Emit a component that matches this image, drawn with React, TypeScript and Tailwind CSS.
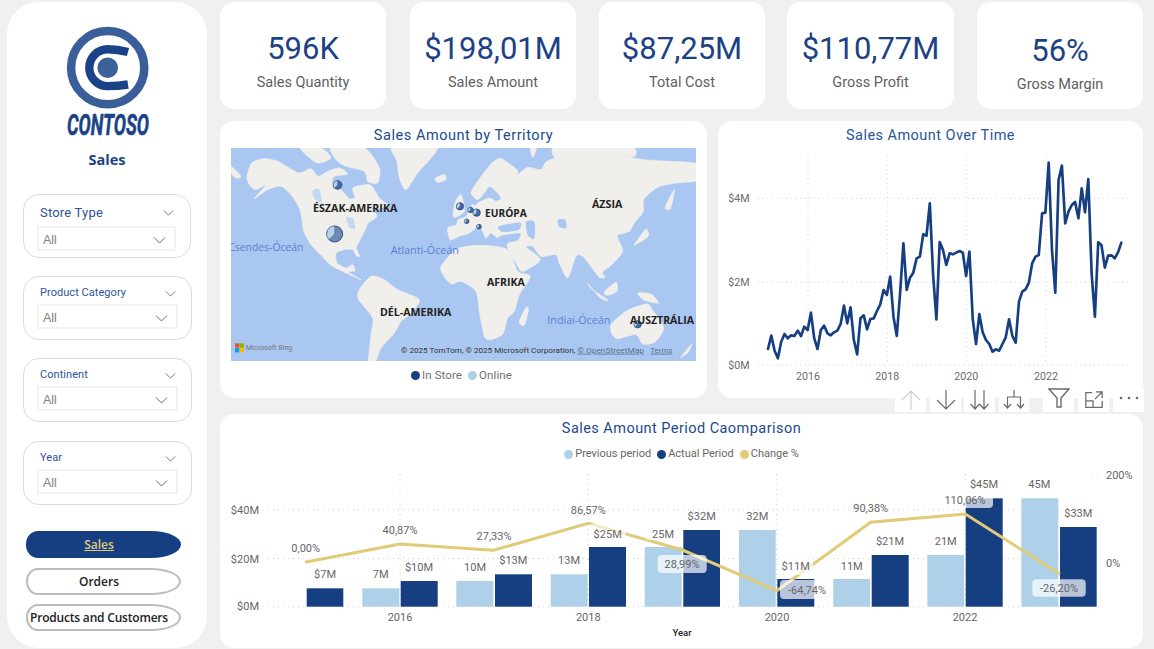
import React from "react";

const NAVY = "#163f82";
const LIGHT = "#aed0e8";
const GOLD = "#e0cb78";

function Kpi({ value, label, w, ml, low }: { value: string; label: string; w: string; ml: string; low?: boolean }) {
  return (
    <div className={`${w} ${ml} h-[107px] bg-white rounded-[14px] flex flex-col items-center ${low ? "pt-[30px]" : "pt-[28px]"}`}>
      <div className="text-[31px] font-[450] leading-[38px] text-[#1c4283]">{value}</div>
      <div className="text-[14.5px] leading-[20px] mt-[5px] text-[#5f5f5f]">{label}</div>
    </div>
  );
}

function Chevron({ cls }: { cls: string }) {
  return (
    <svg className={cls} viewBox="0 0 12 7" fill="none" stroke="#666" strokeWidth="1">
      <path d="M0.5 0.5 6 6 11.5 0.5" />
    </svg>
  );
}

function Slicer({ title, small, mt, w }: { title: string; small?: boolean; mt: string; w: string }) {
  return (
    <div className={`${w} ${mt} ml-[16px] h-[64px] rounded-[16px] border border-[#dcdcdc] pl-[13px] ${small ? "pr-[13px] pt-[8px]" : "pr-[14px] pt-[9px]"}`}>
      <div className="flex items-center justify-between pl-[3px] pr-[2px] h-[17px]">
        <span className={small ? "text-[11px] tracking-[0.05px] text-[#2d5596]" : "text-[13px] tracking-[0.2px] text-[#2d5596]"}>{title}</span>
        <Chevron cls="w-[11px] h-[6px]" />
      </div>
      <div className={`${small ? "mt-[2px]" : "mt-[5px]"} h-[25px] border-2 border-[#f2f2f2] flex items-center justify-between pl-[4px] pr-[8px] pt-[3px] text-[12.5px] text-[#808080] [font-family:'Liberation_Sans',sans-serif]`}>
        <span>All</span>
        <Chevron cls="w-[13px] h-[7px]" />
      </div>
    </div>
  );
}

function Logo() {
  return (
    <svg className="w-[90px] h-[112px] mx-auto mt-[22px] block" viewBox="62 24 90 112">
      <circle cx="107.7" cy="67.7" r="36.6" fill="none" stroke="#3a5e99" strokeWidth="8.5" />
      <path d="M128 52Q118 49.3 107.7 49.3A18.4 18.4 0 0 0 107.7 86.100Q118 86.100 128 84.500" fill="none" stroke="#1a4287" strokeWidth="8.400" />
      <circle cx="107.7" cy="67.7" r="10.3" fill="#3c6199" />
      <text x="67" y="134.500" textLength="82" lengthAdjust="spacingAndGlyphs" fontSize="30" fontWeight="700" fontStyle="italic" fill="#1a4287" stroke="#1a4287" strokeWidth="0.6">CONTOSO</text>
    </svg>
  );
}

function NavBtn({ label, active, mt, tight }: { label: string; active?: boolean; mt: string; tight?: boolean }) {
  const base = "ml-[19px] w-[155px] h-[27px] flex items-center justify-center pr-[9px] text-[12px] font-semibold [font-family:'Open_Sans',sans-serif] rounded-[12px_30px_30px_12px/13px_50%_50%_13px]";
  return (
    <div className={`${base} ${mt} ${active ? "bg-[#163f82] text-[#e0cb78] underline" : "bg-white border-2 border-[#bcbcbc] text-[#222]"} ${tight ? "tracking-[-0.2px] whitespace-nowrap" : ""}`}>
      {label}
    </div>
  );
}

function Sidebar() {
  return (
    <div className="w-[200px] h-[646px] bg-white rounded-[32px] flex flex-col shrink-0">
      <Logo />
      <div className="mt-[14px] text-center text-[14.5px] font-bold text-[#1c4283] leading-[20px] [font-family:'Open_Sans',sans-serif]">Sales</div>
      <Slicer title="Store Type" mt="mt-[24px]" w="w-[168px]" />
      <Slicer title="Product Category" small mt="mt-[18px]" w="w-[169px]" />
      <Slicer title="Continent" small mt="mt-[18px]" w="w-[169px]" />
      <Slicer title="Year" small mt="mt-[19px]" w="w-[169px]" />
      <NavBtn label="Sales" active mt="mt-[26px]" />
      <NavBtn label="Orders" mt="mt-[10px]" />
      <NavBtn label="Products and Customers" mt="mt-[9px]" tight />
    </div>
  );
}

function Pie({ cx, cy, r, main }: { cx: number; cy: number; r: number; main?: boolean }) {
  const a = -Math.PI / 2;
  const b = a - 2.35;
  const x0 = cx + r * Math.cos(a);
  const y0 = cy + r * Math.sin(a);
  const x1 = cx + r * Math.cos(b);
  const y1 = cy + r * Math.sin(b);
  return (
    <g>
      <circle cx={cx} cy={cy} r={r} fill={main ? "#7089b3" : "#49689f"} stroke="#163f82" strokeWidth={main ? 2.5 : 2} />
      <path d={`M${cx} ${cy}L${x0} ${y0}A${r} ${r} 0 0 0 ${x1} ${y1}Z`} fill="#b8d2e8" stroke="#163f82" strokeWidth="1" />
    </g>
  );
}

function smooth(points: string) {
  const p = points.split(" ").map((s) => s.split(",").map(Number));
  const n = p.length;
  let d = `M${p[0][0]} ${p[0][1]}`;
  for (let i = 0; i < n; i++) {
    const a = p[(i - 1 + n) % n];
    const b = p[i];
    const c = p[(i + 1) % n];
    const e = p[(i + 2) % n];
    const k = 8;
    d += `C${b[0] + (c[0] - a[0]) / k} ${b[1] + (c[1] - a[1]) / k} ${c[0] - (e[0] - b[0]) / k} ${c[1] - (e[1] - b[1]) / k} ${c[0]} ${c[1]}`;
  }
  return d + "Z";
}

const landLeft = [
  "48,85 62,45 100,32 140,40 175,60 205,75 240,62 262,85 290,70 325,60 350,78 310,85 303,105 308,122 330,125 355,152 372,148 365,120 395,112 420,112 445,150 470,172 440,182 420,178 438,205 412,225 405,240 385,280 376,300 386,325 375,322 365,305 340,305 315,315 318,345 345,360 365,350 372,368 352,372 390,395 345,375 300,352 270,322 240,290 218,250 213,215 205,180 180,140 150,115 110,125 70,152 105,110 75,125 55,110",
  "210,0 270,0 300,30 260,45 225,20",
  "300,0 400,0 445,60 440,105 410,100 400,70 345,55 320,40",
  "0,55 30,85 15,90 0,75",
  "485,-5 615,-5 600,30 560,75 525,125 505,90 498,40",
  "612,90 640,80 645,95 620,103",
  "385,425 420,385 460,395 500,425 565,455 535,500 510,520 490,555 450,600 430,650 412,650 420,560 425,510 383,455",
  "672,165 690,140 700,190 668,208",
  "690,298 665,312 630,355 635,378 660,408 690,400 735,430 745,490 760,565 780,575 815,558 830,510 850,490 865,440 898,385 860,370 830,305 750,292",
];

const landRight = [
  "-40,240 -15,232 -8,215 15,205 30,178 35,168 42,175 50,165 85,150 105,160 120,150 105,130 85,115 70,135 50,155 30,135 50,100 90,48 120,32 168,65 170,80 200,58 240,65 260,38 350,16 450,20 560,36 720,48 720,95 640,106 590,118 548,155 547,190 520,225 505,250 480,258 468,265 485,310 450,352 425,372 432,388 415,388 395,362 365,325 345,325 320,390 295,345 285,320 240,325 215,295 195,298 238,335 185,370 165,345 140,300 142,285 170,278 178,255 120,262 110,270 90,255 75,270 60,240 45,240 25,255 -5,265 -32,275",
  "530,275 555,243 562,265 520,292",
  "612,178 640,125 628,182",
  "380,405 418,450 442,457 395,425",
  "430,432 465,403 468,430 440,442",
  "530,435 570,438 592,465 550,457",
  "450,530 490,493 520,478 560,468 577,490 608,540 582,582 545,588 525,560 470,572 453,557",
  "660,628 692,588 682,612",
  "175,522 195,478 202,485 190,532",
  "208,-5 228,-5 215,28",
  "285,-5 505,-5 520,25 450,25 300,42",
];

const waterRight = [
  "195,222 220,222 220,272 200,262",
  "113,235 178,224 172,246 125,252",
  "290,215 312,215 316,240 295,237",
];

const waterLeft = ["345,208 367,213 372,242 355,237", "245,128 264,123 272,162 250,152"];

function WorldMap() {
  return (
    <svg className="block w-[465px] h-[213px] mx-auto" viewBox="33 84 1395 639">
      <rect x="33" y="84" width="1395" height="639" fill="#a9c7f0" />
      <g transform="translate(33 84)" stroke="#f0efeb" strokeWidth="2">
        {landLeft.map((p, i) => (
          <path key={i} d={smooth(p)} fill="#f0efeb" />
        ))}
      </g>
      <g transform="translate(33 84)">
        {waterLeft.map((p, i) => (
          <path key={i} d={smooth(p)} fill="#c3d7f0" />
        ))}
      </g>
      <g transform="translate(723 84)" stroke="#f0efeb" strokeWidth="2">
        {landRight.map((p, i) => (
          <path key={i} d={smooth(p)} fill="#f0efeb" />
        ))}
      </g>
      <g transform="translate(723 84)">
        {waterRight.map((p, i) => (
          <path key={i} d={smooth(p)} fill="#a9c7f0" />
        ))}
      </g>
      <Pie cx={353} cy={195} r={13} />
      <Pie cx={344} cy={342} r={24} main />
      <Pie cx={720} cy={259} r={11} />
      <Pie cx={752} cy={270} r={8} />
      <Pie cx={770} cy={278} r={11} />
      <Pie cx={740} cy={304} r={7} />
      <Pie cx={777} cy={320} r={7} />
      <Pie cx={1253} cy={613} r={11} />
      <g fontSize="32" fontWeight="700" fill="#222" className="[font-family:'Open_Sans',sans-serif]">
        <text x="279" y="275" textLength="253" lengthAdjust="spacingAndGlyphs">ÉSZAK-AMERIKA</text>
        <text x="795" y="291" textLength="125" lengthAdjust="spacingAndGlyphs">EURÓPA</text>
        <text x="1116" y="264" textLength="91" lengthAdjust="spacingAndGlyphs">ÁZSIA</text>
        <text x="801" y="499" textLength="113" lengthAdjust="spacingAndGlyphs">AFRIKA</text>
        <text x="480" y="587" textLength="214" lengthAdjust="spacingAndGlyphs">DÉL-AMERIKA</text>
        <text x="1230" y="613" textLength="192" lengthAdjust="spacingAndGlyphs">AUSZTRÁLIA</text>
      </g>
      <g fontSize="33" fill="#5a7fd2" className="[font-family:'Open_Sans',sans-serif]">
        <text x="25" y="393" textLength="225" lengthAdjust="spacingAndGlyphs">Csendes-Óceán</text>
        <text x="512" y="402" textLength="205" lengthAdjust="spacingAndGlyphs">Atlanti-Óceán</text>
        <text x="982" y="612" textLength="189" lengthAdjust="spacingAndGlyphs">Indiai-Óceán</text>
      </g>
      <rect x="45" y="670" width="13" height="13" fill="#f25022" />
      <rect x="59" y="670" width="13" height="13" fill="#7fba00" />
      <rect x="45" y="684" width="13" height="13" fill="#00a4ef" />
      <rect x="59" y="684" width="13" height="13" fill="#ffb900" />
      <text x="78" y="690" fontSize="21" fill="#777" textLength="139" lengthAdjust="spacingAndGlyphs">Microsoft Bing</text>
      <text x="543" y="698" fontSize="24" fill="#333" textLength="523" lengthAdjust="spacingAndGlyphs">© 2025 TomTom, © 2025 Microsoft Corporation,</text>
      <text x="1072" y="698" fontSize="24" fill="#5a6f90" textLength="200" lengthAdjust="spacingAndGlyphs" textDecoration="underline">© OpenStreetMap</text>
      <text x="1291" y="698" fontSize="24" fill="#5a6f90" textLength="66" lengthAdjust="spacingAndGlyphs" textDecoration="underline">Terms</text>
    </svg>
  );
}

const lineY = [687,647,692,715,665,642,655,646,648,632,648,620,630,578,655,687,630,617,640,646,637,632,612,557,610,562,660,703,595,586,628,597,595,573,553,510,525,470,590,648,520,370,510,473,458,415,410,343,347,250,465,598,366,390,435,400,403,398,393,398,468,395,597,672,582,637,660,672,695,688,692,672,652,598,648,668,545,515,508,488,430,410,405,280,278,128,390,518,180,137,310,275,255,246,295,205,277,177,460,590,367,376,443,407,406,415,397,368];

function LineChart() {
  const pts = lineY.map((y, i) => `${160 + (i * 1060) / (lineY.length - 1)},${y}`).join(" ");
  return (
    <svg className="block w-[425px] h-[250px]" viewBox="10 84 1275 750">
      <g stroke="#cfcfcf" strokeWidth="3" strokeDasharray="3 11">
        {[235, 487, 735].map((y) => (
          <line key={y} x1="130" x2="1245" y1={y} y2={y} />
        ))}
        {[280, 518, 755, 994].map((x) => (
          <line key={x} x1={x} x2={x} y1="105" y2="735" />
        ))}
      </g>
      <polyline points={pts} fill="none" stroke={NAVY} strokeWidth="8" strokeLinejoin="round" strokeLinecap="round" />
      <g fontSize="32" fill="#6a6a6a" textAnchor="end">
        <text x="105" y="246">$4M</text>
        <text x="105" y="498">$2M</text>
        <text x="105" y="746">$0M</text>
      </g>
      <g fontSize="32" fill="#6a6a6a" textAnchor="middle">
        <text x="280" y="780">2016</text>
        <text x="518" y="780">2018</text>
        <text x="755" y="780">2020</text>
        <text x="994" y="780">2022</text>
      </g>
    </svg>
  );
}

const bars: [number, number, number, string][] = [
  [306.7, 343.3, 588.3, NAVY],
  [362.3, 399.3, 588.3, LIGHT],
  [400.7, 437.7, 581, NAVY],
  [456.3, 493.3, 581, LIGHT],
  [495, 532, 574.3, NAVY],
  [550.7, 587.7, 574.3, LIGHT],
  [589, 626, 547, NAVY],
  [644.7, 681.7, 547, LIGHT],
  [683.3, 720, 530, NAVY],
  [739, 775.7, 530, LIGHT],
  [777.3, 814.3, 579, NAVY],
  [833.3, 870, 579, LIGHT],
  [871.7, 908.7, 555, NAVY],
  [927.3, 964, 555, LIGHT],
  [965.7, 1002.7, 498.3, NAVY],
  [1021.3, 1058.3, 498.3, LIGHT],
  [1060, 1096.7, 527, NAVY],
];

const barLabels: [string, number, number][] = [
  ["$7M", 325, 578], ["7M", 380.7, 578], ["$10M", 419, 571], ["10M", 475, 571],
  ["$13M", 513.3, 564], ["13M", 569, 564], ["$25M", 607.7, 537.5], ["25M", 663, 537.5],
  ["$32M", 701.7, 520], ["32M", 757.3, 520], ["$11M", 795.7, 569.5], ["11M", 851.7, 569.5],
  ["$21M", 890, 545], ["21M", 945.7, 545], ["$45M", 984, 488], ["45M", 1039.3, 488], ["$33M", 1078.3, 517],
];

const pctLabels: [string, number, number][] = [
  ["0,00%", 305.7, 552], ["40,87%", 400, 534], ["27,33%", 494, 540], ["86,57%", 588.3, 514],
  ["28,99%", 682, 568], ["-64,74%", 807, 594], ["90,38%", 870.7, 512], ["110,06%", 965, 504], ["-26,20%", 1059, 592],
];

function BarChart() {
  return (
    <svg className="block w-[923px] h-[184px]" viewBox="220 464 923 184">
      <g stroke="#cfcfcf" strokeWidth="1" strokeDasharray="1 4">
        {[510, 558.5, 606.7].map((y) => (
          <line key={y} x1="268" x2="1097" y1={y} y2={y} />
        ))}
        {[400, 588.3, 776.7, 965.3].map((x) => (
          <line key={x} x1={x} x2={x} y1="474" y2="606.7" />
        ))}
        <line x1="1092" x2="1100" y1="475" y2="475" />
      </g>
      {bars.map(([a, b, t, c], i) => (
        <rect key={i} x={a} y={t} width={b - a} height={606.7 - t} fill={c} />
      ))}
      <polyline points="305,562.3 400,544 493.3,550.3 588.3,523.3 682.5,550 776.7,590.7 870.7,522.3 965.3,514 1060,574.3" fill="none" stroke={GOLD} strokeWidth="3" />
      <rect x="657.7" y="555" width="49" height="18" rx="4" fill="#ffffff" fillOpacity="0.7" />
      <rect x="780" y="580" width="53" height="19" rx="4" fill="#ffffff" fillOpacity="0.7" />
      <rect x="942" y="494" width="51" height="14" rx="4" fill="#ffffff" fillOpacity="0.7" />
      <rect x="1032.3" y="579.3" width="53.4" height="17.4" rx="4" fill="#ffffff" fillOpacity="0.7" />
      <rect x="590" y="524" width="36" height="15" fill="#ffffff" fillOpacity="0.6" />
      <rect x="646" y="526" width="34" height="14" fill="#ffffff" fillOpacity="0.5" />
      <rect x="781" y="557" width="32" height="18" fill="#ffffff" fillOpacity="0.7" />
      <g fontSize="11" fill="#666" textAnchor="middle">
        {barLabels.map(([t, x, y]) => (
          <text key={t + x} x={x} y={y}>{t}</text>
        ))}
        {pctLabels.map(([t, x, y]) => (
          <text key={t} x={x} y={y}>{t}</text>
        ))}
        <text x="400" y="621">2016</text>
        <text x="588.3" y="621">2018</text>
        <text x="777" y="621">2020</text>
        <text x="965" y="621">2022</text>
      </g>
      <g fontSize="11" fill="#666" textAnchor="end">
        <text x="259" y="514">$40M</text>
        <text x="259" y="562.5">$20M</text>
        <text x="259" y="610">$0M</text>
      </g>
      <g fontSize="11" fill="#666">
        <text x="1106" y="479">200%</text>
        <text x="1106" y="567">0%</text>
      </g>
      <text x="682" y="636" fontSize="9.5" fontWeight="500" fill="#222" textAnchor="middle">Year</text>
    </svg>
  );
}

function Dot({ cls }: { cls: string }) {
  return <span className={`w-[9px] h-[9px] rounded-full inline-block ${cls}`} />;
}

function ToolBtn({ children, w = "w-[31px]" }: { children: React.ReactNode; w?: string }) {
  return <div className={`${w} h-[23px] bg-white flex items-start justify-center`}>{children}</div>;
}

function Toolbar() {
  const s = { fill: "none", stroke: "#6b6b6b", strokeWidth: 1.2 };
  return (
    <div className="absolute top-[389px] left-[895px] flex h-[24px]">
      <ToolBtn>
        <svg className="w-[22px] h-[22px]" viewBox="0 0 22 22" fill="none" stroke="#cdcdcd" strokeWidth="1.2"><path d="M11 21V2M2 11l9-9 9 9" /></svg>
      </ToolBtn>
      <div className="w-[4px]" />
      <ToolBtn>
        <svg className="w-[22px] h-[22px]" viewBox="0 0 22 22" {...s}><path d="M11 1v19M2 11l9 9 9-9" /></svg>
      </ToolBtn>
      <div className="w-[3px]" />
      <ToolBtn>
        <svg className="w-[22px] h-[22px]" viewBox="0 0 22 22" {...s}><path d="M6 1v19M1.500 15l4.500 5 4.500-5M15 1v19M10.500 15l4.500 5 4.500-5" /></svg>
      </ToolBtn>
      <div className="w-[4px]" />
      <ToolBtn w="w-[30px]">
        <svg className="w-[22px] h-[22px]" viewBox="0 0 22 22" {...s}><path d="M11 1v7M4.500 19V8h13v11M1 15l3.500 4 3.500-4M14 15l3.500 4 3.500-4" /></svg>
      </ToolBtn>
      <div className="w-[14px]" />
      <ToolBtn>
        <svg className="w-[22px] h-[20px] -mt-[1px]" viewBox="0 0 22 20" {...s} strokeWidth="1.4"><path d="M1 1h20l-8 9v9h-4v-9z" /></svg>
      </ToolBtn>
      <div className="w-[4px]" />
      <ToolBtn>
        <svg className="w-[20px] h-[20px] mt-[1px]" viewBox="0 0 22 22" {...s} strokeWidth="1.4"><path d="M9 3H2v16h18v-7M2 12h8v7M13 2h7v7M20 2l-8 8" /></svg>
      </ToolBtn>
      <div className="w-[4px]" />
      <ToolBtn>
        <svg className="w-[22px] h-[10px] mt-[4px]" viewBox="0 0 22 10" fill="#6b6b6b"><circle cx="3" cy="5" r="1.300" /><circle cx="11" cy="5" r="1.300" /><circle cx="19" cy="5" r="1.300" /></svg>
      </ToolBtn>
    </div>
  );
}

export default function App() {
  return (
    <div className="relative w-[1154px] h-[649px] overflow-hidden bg-[#f0f0f0] flex pl-[7px] pt-[2px] [font-family:Roboto,sans-serif]">
      <Sidebar />
      <div className="ml-[13px] w-[923px] flex flex-col">
        <div className="flex">
          <Kpi value="596K" label="Sales Quantity" w="w-[166px]" ml="ml-0" />
          <Kpi value="$198,01M" label="Sales Amount" w="w-[166px]" ml="ml-[24px]" />
          <Kpi value="$87,25M" label="Total Cost" w="w-[166px]" ml="ml-[23px]" />
          <Kpi value="$110,77M" label="Gross Profit" w="w-[167px]" ml="ml-[22px]" />
          <Kpi value="56%" label="Gross Margin" w="w-[166px]" ml="ml-[23px]" low />
        </div>
        <div className="mt-[12px] flex justify-between">
          <div className="w-[487px] h-[277px] bg-white rounded-[14px]">
            <div className="h-[27px] pt-[6px] text-center text-[14.5px] tracking-[0.55px] text-[#1c4a8c] leading-[18px]">Sales Amount by Territory</div>
            <WorldMap />
            <div className="mt-[6px] pr-[4px] flex items-center justify-center gap-[2px] text-[11.5px] tracking-[0.1px] text-[#707070] leading-[16px]">
              <Dot cls="bg-[#163f82]" />
              <span className="mr-[4px]">In Store</span>
              <Dot cls="bg-[#aed0e8]" />
              <span>Online</span>
            </div>
          </div>
          <div className="w-[425px] h-[277px] bg-white rounded-[14px]">
            <div className="h-[27px] pt-[6px] text-center text-[14.5px] tracking-[0.45px] text-[#2a5596] leading-[18px]">Sales Amount Over Time</div>
            <LineChart />
          </div>
        </div>
        <div className="mt-[16px] h-[234px] bg-white rounded-[14px] flex flex-col">
          <div className="h-[30px] pt-[6px] text-center text-[14.5px] tracking-[0.45px] text-[#1c4a8c] leading-[18px]">Sales Amount Period Caomparison</div>
          <div className="h-[20px] flex items-center justify-center gap-[2px] text-[11px] text-[#666] leading-[16px]">
            <Dot cls="bg-[#aed0e8]" />
            <span className="mr-[4px]">Previous period</span>
            <Dot cls="bg-[#163f82]" />
            <span className="mr-[4px]">Actual Period</span>
            <Dot cls="bg-[#e0cb78]" />
            <span>Change %</span>
          </div>
          <BarChart />
        </div>
      </div>
      <Toolbar />
    </div>
  );
}
